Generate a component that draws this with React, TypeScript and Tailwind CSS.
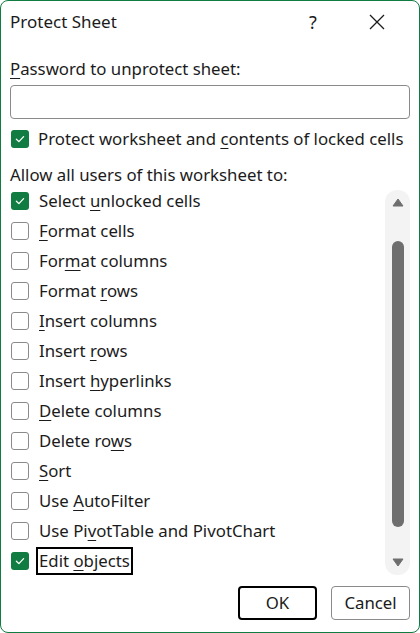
import { ReactNode } from "react";

type Option = { before: string; key: string; after: string; checked?: boolean; focused?: boolean };

const options: Option[] = [
  { before: "Select ", key: "u", after: "nlocked cells", checked: true },
  { before: "", key: "F", after: "ormat cells" },
  { before: "For", key: "m", after: "at columns" },
  { before: "Format ", key: "r", after: "ows" },
  { before: "", key: "I", after: "nsert columns" },
  { before: "Insert ", key: "r", after: "ows" },
  { before: "Insert ", key: "h", after: "yperlinks" },
  { before: "", key: "D", after: "elete columns" },
  { before: "Delete ro", key: "w", after: "s" },
  { before: "", key: "S", after: "ort" },
  { before: "Use ", key: "A", after: "utoFilter" },
  { before: "Use Pi", key: "v", after: "otTable and PivotChart" },
  { before: "Edit ", key: "o", after: "bjects", checked: true, focused: true },
];

const Key = ({ children }: { children: ReactNode }) => (
  <span className="underline decoration-1 underline-offset-[3px]">{children}</span>
);

const Checkbox = ({ checked }: { checked?: boolean }) =>
  checked ? (
    <span className="flex h-[18px] w-[18px] shrink-0 items-center justify-center rounded-[3px] bg-[#107c41]">
      <svg width="12" height="12" viewBox="0 0 12 12" fill="none">
        <path d="M2.4 6.2 4.9 8.6 9.6 3.6" stroke="white" strokeWidth="1.3" strokeLinecap="round" strokeLinejoin="round" />
      </svg>
    </span>
  ) : (
    <span className="h-[18px] w-[18px] shrink-0 rounded-[3px] border border-[#8a8a8a] bg-white" />
  );

export default function App() {
  return (
    <div
      className="flex h-[633px] w-[420px] flex-col rounded-[8px] border border-[#107c41] bg-white text-[16.8px] text-[#1b1b1b]"
      style={{ fontFamily: '"Noto Sans", "Open Sans", sans-serif' }}
    >
      {/* title bar */}
      <div className="flex h-[42px] items-center pl-[9px]">
        <span className="flex-1 text-[17px]">Protect Sheet</span>
        <span className="w-[20px] text-center text-[18px]">?</span>
        <span className="flex w-[96px] items-center justify-center pl-[12px]">
          <svg width="16" height="16" viewBox="0 0 16 16">
            <path d="M1 1 15 15M15 1 1 15" stroke="#1b1b1b" strokeWidth="1.3" />
          </svg>
        </span>
      </div>

      <div className="flex flex-col px-[9px]">
        <div className="mt-[14px] leading-[24px]">
          <Key>P</Key>assword to unprotect sheet:
        </div>
        <div className="mt-[4px] h-[34px] rounded-[4px] border border-[#8a8a8a]" />

        <div className="mt-[8px] flex items-center gap-[9px] pl-[1px]">
          <Checkbox checked />
          <span className="leading-[24px]">
            Protect worksheet and <Key>c</Key>ontents of locked cells
          </span>
        </div>

        <div className="mt-[12px] leading-[24px]">Allow all users of this worksheet to:</div>

        <div className="-mt-[1px] flex">
          <div className="flex flex-1 flex-col">
            {options.map((o, i) => (
              <div key={i} className="flex h-[30px] items-center gap-[7px] pl-[1px]">
                <Checkbox checked={o.checked} />
                <span
                  className={
                    o.focused
                      ? "border-2 border-black px-[1px] leading-[24px]"
                      : "px-[3px] leading-[24px]"
                  }
                >
                  {o.before}
                  <Key>{o.key}</Key>
                  {o.after}
                </span>
              </div>
            ))}
          </div>

          {/* scrollbar */}
          <div className="mt-[4px] flex h-[385px] w-[25px] flex-col items-center rounded-[12px] bg-[#f3f3f3] py-[8px]">
            <svg width="12" height="10" viewBox="0 0 12 10">
              <path d="M6 1 11 8H1Z" fill="#6e6e6e" stroke="#6e6e6e" strokeLinejoin="round" />
            </svg>
            <div className="mt-[33px] h-[286px] w-[12px] rounded-full bg-[#6e6e6e]" />
            <div className="flex-1" />
            <svg width="12" height="10" viewBox="0 0 12 10">
              <path d="M6 9 11 2H1Z" fill="#6e6e6e" stroke="#6e6e6e" strokeLinejoin="round" />
            </svg>
          </div>
        </div>

        <div className="mt-[10px] flex justify-end gap-[14px]">
          <button className="h-[34px] w-[79px] rounded-[4px] border-2 border-black bg-white">OK</button>
          <button className="h-[34px] w-[79px] rounded-[4px] border border-[#8a8a8a] bg-white">Cancel</button>
        </div>
      </div>
    </div>
  );
}
